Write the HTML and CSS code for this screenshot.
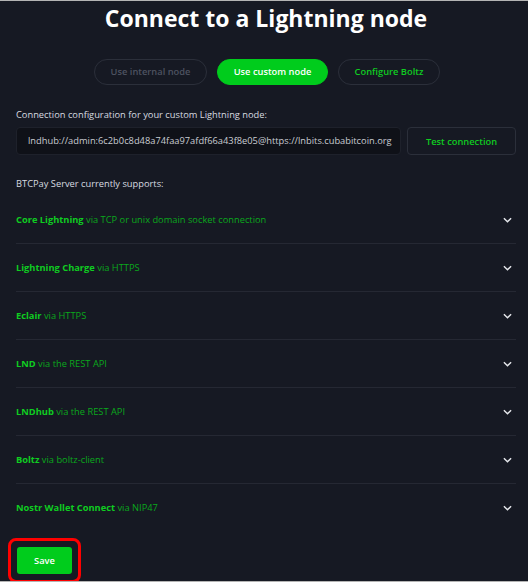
FILE: index.html
```html
<!DOCTYPE html>
<html>
<head>
<meta charset="utf-8">
<link rel="stylesheet" href="styles.css">
</head>
<body>
<div class="page">
  <h1 class="title">Connect to a Lightning node</h1>
  <div class="tabs">
    <span class="tab tab-off">Use internal node</span>
    <span class="tab tab-on">Use custom node</span>
    <span class="tab tab-link">Configure Boltz</span>
  </div>
  <label class="label">Connection configuration for your custom Lightning node:</label>
  <div class="conn">
    <div class="input">lndhub://admin:6c2b0c8d48a74faa97afdf66a43f8e05@https://lnbits.cubabitcoin.org</div>
    <button class="test">Test connection</button>
  </div>
  <p class="supports">BTCPay Server currently supports:</p>
  <div class="list">
    <div class="row"><span><b>Core Lightning</b> via TCP or unix domain socket connection</span><svg class="chev" viewBox="0 0 10 6"><path d="M1 1l4 4 4-4"/></svg></div>
    <div class="row"><span><b>Lightning Charge</b> via HTTPS</span><svg class="chev" viewBox="0 0 10 6"><path d="M1 1l4 4 4-4"/></svg></div>
    <div class="row"><span><b>Eclair</b> via HTTPS</span><svg class="chev" viewBox="0 0 10 6"><path d="M1 1l4 4 4-4"/></svg></div>
    <div class="row"><span><b>LND</b> via the REST API</span><svg class="chev" viewBox="0 0 10 6"><path d="M1 1l4 4 4-4"/></svg></div>
    <div class="row"><span><b>LNDhub</b> via the REST API</span><svg class="chev" viewBox="0 0 10 6"><path d="M1 1l4 4 4-4"/></svg></div>
    <div class="row"><span><b>Boltz</b> via boltz-client</span><svg class="chev" viewBox="0 0 10 6"><path d="M1 1l4 4 4-4"/></svg></div>
    <div class="row"><span><b>Nostr Wallet Connect</b> via NIP47</span><svg class="chev" viewBox="0 0 10 6"><path d="M1 1l4 4 4-4"/></svg></div>
  </div>
  <div class="actions">
    <div class="highlight"><button class="save">Save</button></div>
  </div>
</div>
</body>
</html>
```
FILE: styles.css
```css
html, body {
  margin: 0;
  padding: 0;
  background: #161923;
}
body {
  font-family: "Open Sans", "Noto Sans", sans-serif;
  color: #e6e8ec;
}
.page {
  box-sizing: border-box;
  height: 582px;
  overflow: hidden;
  border-top: 1px solid #b4b4b4;
  border-bottom: 1px solid #b4b4b4;
  padding: 0 12px 0 16px;
}
.title {
  margin: 2px 0 0;
  text-align: center;
  font-size: 23px;
  font-weight: 700;
  line-height: 30px;
  color: #ffffff;
}
.tabs {
  display: flex;
  justify-content: center;
  gap: 10px;
  margin-top: 26px;
  padding-left: 2px;
}
.tab {
  box-sizing: border-box;
  height: 26px;
  line-height: 24px;
  border-radius: 13px;
  font-size: 9.3px;
  font-weight: 600;
  border: 1px solid #2b2f3a;
  text-align: center;
}
.tab-off { width: 113px; color: #4d5260; }
.tab-on { width: 111px; background: #00cc1c; border-color: #00cc1c; color: #ffffff; }
.tab-link { width: 102px; color: #0fcc21; }
.label {
  display: block;
  margin-top: 22px;
  font-size: 9.3px;
  line-height: 15px;
  color: #d8dbe0;
}
.conn {
  display: flex;
  gap: 6px;
  margin-top: 5px;
}
.input {
  box-sizing: border-box;
  width: 385px;
  height: 28px;
  line-height: 26px;
  padding: 0 11px;
  border: 1px solid #1e212b;
  border-radius: 4px;
  background: #0f1118;
  font-size: 9.3px;
  color: #c9ccd2;
  white-space: nowrap;
  overflow: hidden;
}
.test {
  box-sizing: border-box;
  width: 109px;
  height: 28px;
  border: 1px solid #2b2f3a;
  border-radius: 4px;
  background: #161923;
  color: #0fcc21;
  font-family: inherit;
  font-size: 9.3px;
  font-weight: 600;
}
.supports {
  margin: 21px 0 0;
  font-size: 9.3px;
  line-height: 15px;
  color: #d8dbe0;
}
.list {
  margin-top: 5px;
}
.row {
  display: flex;
  justify-content: space-between;
  align-items: center;
  height: 47px;
  border-bottom: 1px solid #252833;
  font-size: 9.3px;
  color: #0aa81c;
  padding-right: 4px;
}
.row:last-child { border-bottom: none; }
.row b { color: #0fcc21; font-weight: 700; }
.chev {
  width: 9px;
  height: 6px;
  fill: none;
  stroke: #e6e8ec;
  stroke-width: 1.6;
}
.actions {
  margin-top: 7px;
  margin-left: -8px;
}
.highlight {
  display: inline-block;
  padding: 6px;
  border: 3px solid #ff0000;
  border-radius: 8px;
}
.save {
  display: block;
  width: 55px;
  height: 27px;
  border: none;
  border-radius: 3px;
  background: #00cc1c;
  color: #ffffff;
  font-family: inherit;
  font-size: 9.3px;
  font-weight: 600;
}
```
